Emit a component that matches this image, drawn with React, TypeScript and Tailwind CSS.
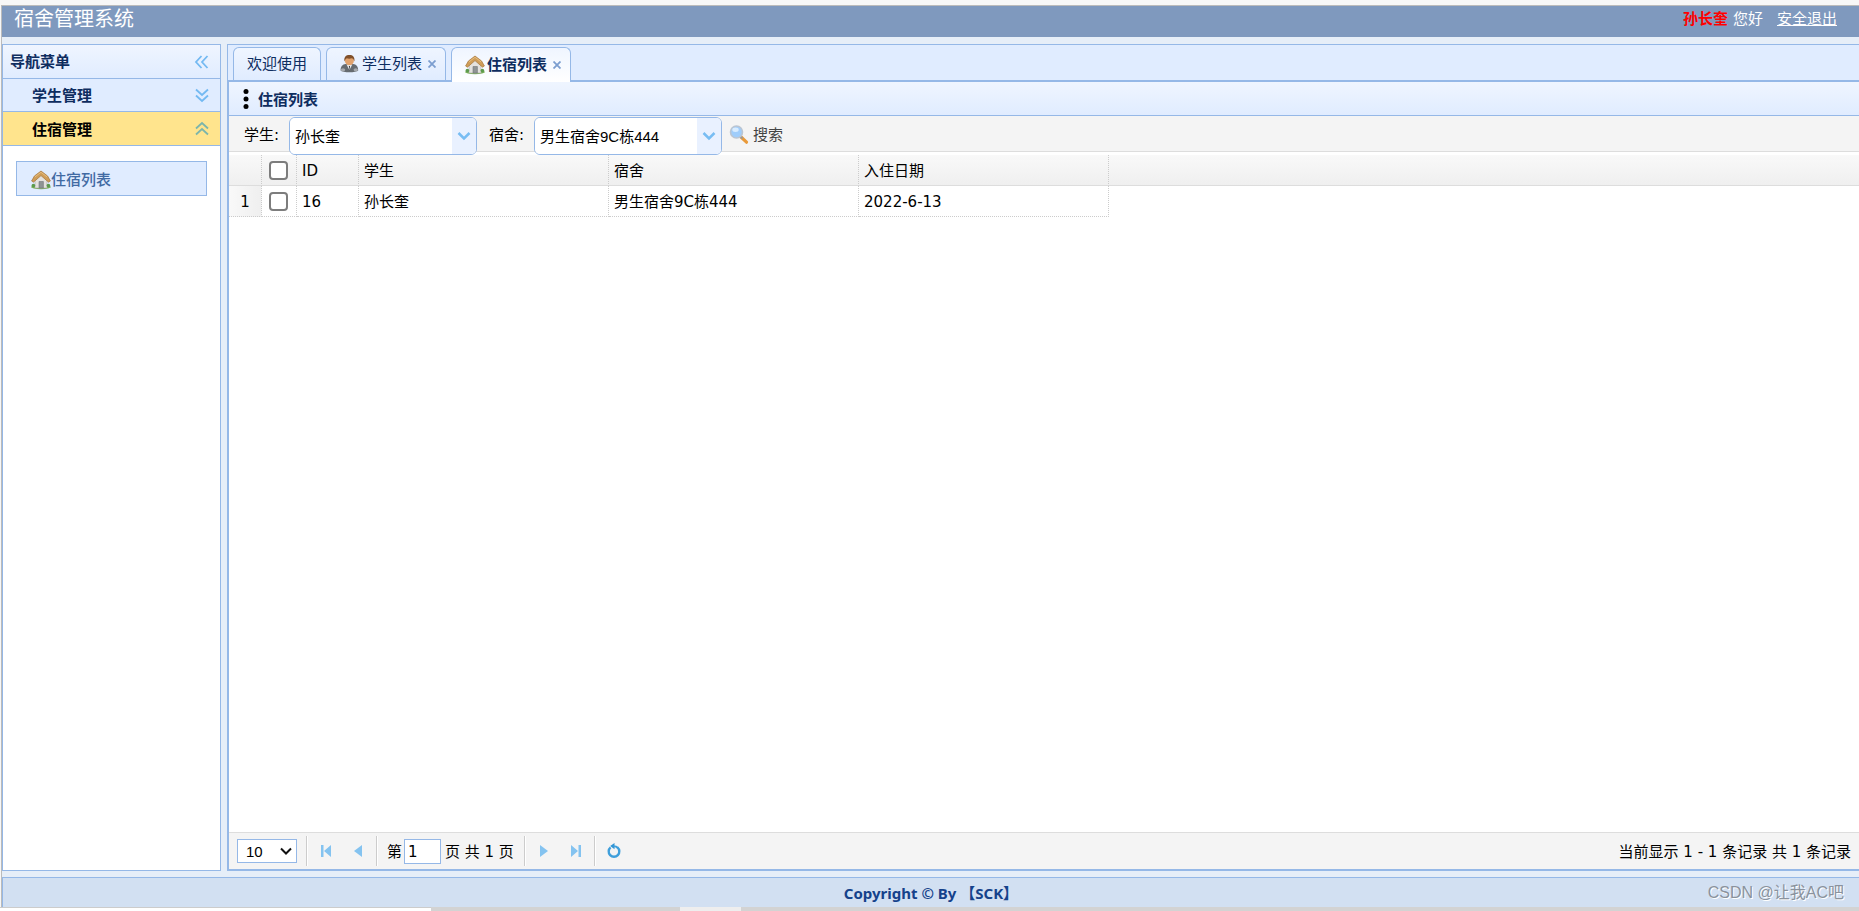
import type { ReactElement, ReactNode } from "react";
import { useState } from "react";

const outline = "border-[#95b8e7]";
const pagerButtonClass = "grid h-7 w-7 place-items-center";
const separatorClass = "h-[30px] w-0.5 border-l border-[#ccc] border-r border-r-white";
const dotted = "border-r border-dotted border-[#ccc]";
const cellClass = `px-[5px] pt-0.5 ${dotted}`;

interface Stay {
  readonly id: number;
  readonly student: string;
  readonly dorm: string;
  readonly date: string;
}

const stays: Stay[] = [{ id: 16, student: "孙长奎", dorm: "男生宿舍9C栋444", date: "2022-6-13" }];

function HouseIcon(): ReactElement {
  return (
    <svg className="h-5 w-5 shrink-0" viewBox="0 0 20 20" aria-hidden="true">
      <ellipse cx="10" cy="17" rx="10" ry="2.2" fill="#7cb05a" />
      <path d="M4 9 10 4l6 5v9H4z" fill="#e4e2de" stroke="#a9a7a2" strokeWidth="0.6" />
      <path d="M8 11.5h4.4V18H8z" fill="#8f9494" stroke="#73777a" strokeWidth="0.6" />
      <path d="M0.6 11 3.4 6 10 1l6.6 5 2.8 5-1.8 1.2L10 5.6 2.4 12.2z" fill="#cf9d58" stroke="#a57336" strokeWidth="0.7" />
      <path d="M3.8 7 10 2.3 16.2 7" fill="none" stroke="#e6bd7e" strokeWidth="1" />
      <circle cx="2.4" cy="15.6" r="1.8" fill="#5c9a4c" />
      <circle cx="17.4" cy="15.6" r="1.8" fill="#5c9a4c" />
    </svg>
  );
}

function StudentIcon(): ReactElement {
  return (
    <svg className="h-5 w-5 shrink-0" viewBox="0 0 20 20" aria-hidden="true">
      <path d="M0.600 16.500c0-4 2-6.200 5-6.500h7.600c3 .3 5 2.500 5 6.500-2 2.400-15.600 2.400-17.600 0z" fill="#666b70" />
      <path d="M6.500 10.500 9.400 16l2.900-5.500z" fill="#e8ebee" />
      <path d="m8.900 12 .5 5 .6-5z" fill="#33373b" />
      <ellipse cx="3" cy="15.800" rx="2.200" ry="1.500" fill="#a6a9ad" />
      <ellipse cx="15.800" cy="15.800" rx="2.200" ry="1.500" fill="#a6a9ad" />
      <circle cx="9.400" cy="6.800" r="4.500" fill="#e2a26c" />
      <path d="M4.400 7.500C3.800 2.800 6 1 9.400 1s5.600 1.800 5 6.500c-.8-2.200-1.600-3-2.600-3.200-2 .6-3.700.5-4.900 0-1.200.6-1.900 1.700-2.500 3.200z" fill="#80502a" />
    </svg>
  );
}

function SearchIcon(): ReactElement {
  return (
    <svg className="h-5 w-5 shrink-0" viewBox="0 0 20 20" aria-hidden="true">
      <path d="m12 12 5.500 5.200" stroke="#e99a3a" strokeWidth="3.200" strokeLinecap="round" />
      <path d="m11.500 11.500 2 2" stroke="#999" strokeWidth="2" />
      <circle cx="7.500" cy="7" r="6" fill="#9fcdfb" stroke="#bac5d2" strokeWidth="1.600" />
      <ellipse cx="6.500" cy="4.800" rx="3.200" ry="2.200" fill="#d8ecff" />
    </svg>
  );
}

function Chevrons({ d, color = "#73b9f2" }: { readonly d: string; readonly color?: string }): ReactElement {
  return (
    <svg className="h-4 w-4" viewBox="0 0 16 16" fill="none" stroke={color} strokeWidth="1.800" aria-hidden="true">
      <path d={d} />
    </svg>
  );
}

interface TabProps {
  readonly label: string;
  readonly icon?: ReactNode;
  readonly isActive?: boolean;
}

function Tab({ label, icon, isActive = false }: TabProps): ReactElement {
  const stateClass = isActive
    ? "h-[35px] border-b-0 bg-linear-to-b from-[#eff5ff] to-white font-bold"
    : "h-[33px] border-b-0 bg-linear-to-b from-[#eff5ff] to-[#e0ecff]";
  return (
    <div className={`flex items-center rounded-t-md border px-[11px] text-[#0e2d5f] ${outline} ${stateClass}`}>
      <button type="button" role="tab" aria-selected={isActive} className="flex items-center gap-0.5 whitespace-nowrap px-0.5">
        {icon}
        <span>{label}</span>
      </button>
      {icon ? (
        <button type="button" aria-label={`关闭${label}`} className="-mr-1 ml-0.5 grid h-4 w-3 place-items-center">
          <svg className="h-2 w-2" viewBox="0 0 8 8" stroke="#7c9ed0" strokeWidth="1.800" aria-hidden="true">
            <path d="m.5.5 7 7m0-7-7 7" />
          </svg>
        </button>
      ) : null}
    </div>
  );
}

function Combo({ id, value }: { readonly id: string; readonly value: string }): ReactElement {
  return (
    <div className={`relative z-10 flex h-[38px] w-[188px] overflow-hidden rounded-md border bg-white ${outline}`}>
      <select
        id={id}
        defaultValue={value}
        className="w-full appearance-none bg-white pl-[5px] pr-6 pt-0.5 font-['Liberation_Sans','Noto_Sans_CJK_SC',sans-serif]"
      >
        <option>{value}</option>
      </select>
      <span className="pointer-events-none absolute inset-y-0 right-0 grid w-6 place-items-center bg-[#e9f1ff]">
        <svg className="h-4 w-4" viewBox="0 0 16 16" fill="none" stroke="#78bdf3" strokeWidth="2.500" aria-hidden="true">
          <path d="m2.500 5 5.500 5.500L13.500 5" />
        </svg>
      </span>
    </div>
  );
}

function Checkbox({ label }: { readonly label: string }): ReactElement {
  return (
    <input
      type="checkbox"
      aria-label={label}
      className="ml-[7px] block h-[19px] w-[19px] appearance-none rounded-[4px] border-2 border-[#7d7d7d] bg-white checked:bg-[#0075ff]"
    />
  );
}

function Sidebar(): ReactElement {
  return (
    <nav className={`flex w-[219px] shrink-0 flex-col border bg-white ${outline}`}>
      <div className={`flex h-[34px] items-center justify-between border-b bg-linear-to-b from-[#eff5ff] to-[#e0ecff] pl-[7px] pr-2.5 font-bold text-[#0e2d5f] ${outline}`}>
        <h2>导航菜单</h2>
        <button type="button" aria-label="收起">
          <Chevrons d="M7.500 2 2 8l5.500 6M13.500 2 8 8l5.500 6" />
        </button>
      </div>
      <button type="button" className={`flex h-[33px] items-center justify-between border-b bg-[#e0ecff] pl-[29px] pr-2.5 font-bold text-[#0e2d5f] ${outline}`}>
        <span className="pt-0.5">学生管理</span>
        <Chevrons d="m2 2.500 6 5.500 6-5.500M2 8.500 8 14l6-5.500" />
      </button>
      <button type="button" className={`flex h-[34px] items-center justify-between border-b bg-[#ffe48d] pl-[29px] pr-2.5 font-bold ${outline}`}>
        <span className="pt-0.5">住宿管理</span>
        <Chevrons d="m2 7.500 6-5.500 6 5.500M2 13.500 8 8l6 5.500" color="#7cb5ab" />
      </button>
      <div className="px-[13px] py-[15px]">
        <a href="#stays" className={`flex h-[35px] items-center border bg-[#e0ecff] px-3.5 pt-[3px] font-medium text-[#416aa3] ${outline}`}>
          <HouseIcon />
          住宿列表
        </a>
      </div>
    </nav>
  );
}

function StayTable(): ReactElement {
  return (
    <table className="mt-[3px] w-full table-fixed border-separate border-spacing-0 text-left">
      <colgroup>
        <col className="w-[33px]" />
        <col className="w-[35px]" />
        <col className="w-[62px]" />
        <col className="w-[250px]" />
        <col className="w-[250px]" />
        <col className="w-[250px]" />
        <col />
      </colgroup>
      <thead className="bg-linear-to-b from-[#f9f9f9] to-[#efefef]">
        <tr className="h-[31px] *:border-b *:border-b-[#ddd] *:[border-bottom-style:solid] *:font-normal">
          <th className={dotted} />
          <th className={dotted}><Checkbox label="全选" /></th>
          <th className={cellClass}>ID</th>
          <th className={cellClass}>学生</th>
          <th className={cellClass}>宿舍</th>
          <th className={cellClass}>入住日期</th>
          <th />
        </tr>
      </thead>
      <tbody>
        {stays.map((stay, i) => (
          <tr key={stay.id} className="h-[31px]">
            <td className={`border-b bg-linear-to-r from-[#f9f9f9] to-[#efefef] text-center ${cellClass}`}>{i + 1}</td>
            <td className={`border-b ${dotted}`}><Checkbox label={stay.student} /></td>
            <td className={`border-b ${cellClass}`}>{stay.id}</td>
            <td className={`border-b ${cellClass}`}>{stay.student}</td>
            <td className={`border-b ${cellClass}`}>{stay.dorm}</td>
            <td className={`border-b ${cellClass}`}>{stay.date}</td>
            <td />
          </tr>
        ))}
      </tbody>
    </table>
  );
}

function Pager(): ReactElement {
  const [page, setPage] = useState("1");
  return (
    <div className="flex h-[37px] items-center border-t border-[#ddd] bg-[#f4f4f4] px-2">
      <div className="relative mr-[9px]">
        <select
          aria-label="每页条数"
          className={`block h-6 w-[60px] appearance-none border bg-white pl-2 pt-px font-['Liberation_Sans',sans-serif] ${outline}`}
        >
          <option>10</option>
          <option>20</option>
        </select>
        <svg className="pointer-events-none absolute right-[5px] top-1.5 h-3 w-3" viewBox="0 0 12 12" fill="none" stroke="#111" strokeWidth="2" aria-hidden="true">
          <path d="m1 3.500 5 5 5-5" />
        </svg>
      </div>
      <span className={separatorClass} />
      <div className="flex gap-1 px-1">
        <button type="button" aria-label="首页" className={pagerButtonClass}>
          <svg className="h-3.5 w-3" viewBox="0 0 12 14" fill="#84c3f0" aria-hidden="true"><path d="M1 1h2.500v12H1zM11 1v12L4 7z" /></svg>
        </button>
        <button type="button" aria-label="上一页" className={pagerButtonClass}>
          <svg className="h-3.5 w-3" viewBox="0 0 12 14" fill="#84c3f0" aria-hidden="true"><path d="M10 1v12L2 7z" /></svg>
        </button>
      </div>
      <span className={separatorClass} />
      <label className="flex items-center px-[9px]">
        <span className="pt-0.5">第</span>
        <input
          value={page}
          onChange={(event) => { setPage(event.target.value); }}
          className={`ml-0.5 mr-1 h-[25px] w-[37px] border bg-white px-[3px] pt-px ${outline}`}
        />
        <span className="whitespace-nowrap pr-px pt-0.5">页 共 1 页</span>
      </label>
      <span className={separatorClass} />
      <div className="flex gap-1 px-1">
        <button type="button" aria-label="下一页" className={pagerButtonClass}>
          <svg className="h-3.5 w-3" viewBox="0 0 12 14" fill="#84c3f0" aria-hidden="true"><path d="M2 1v12l8-6z" /></svg>
        </button>
        <button type="button" aria-label="末页" className={pagerButtonClass}>
          <svg className="h-3.5 w-3" viewBox="0 0 12 14" fill="#84c3f0" aria-hidden="true"><path d="M8.500 1H11v12H8.500zM1 1v12l7-6z" /></svg>
        </button>
      </div>
      <span className={separatorClass} />
      <button type="button" aria-label="刷新" className={`ml-1 ${pagerButtonClass}`}>
        <svg className="h-4 w-4" viewBox="0 0 16 16" fill="none" aria-hidden="true">
          <path d="M4.600 4.400A5.300 5.300 0 1 0 11.400 4.400" stroke="#3f9fdb" strokeWidth="2.400" />
          <path d="M8.500 0v6.200L4.200 3z" fill="#2f93d4" />
          <path d="M7.500 3.200c2 0 3.200.3 4.500 1.800" stroke="#3f9fdb" strokeWidth="2" />
        </svg>
      </button>
      <p className="ml-auto whitespace-nowrap pt-0.5">当前显示 1 - 1 条记录 共 1 条记录</p>
    </div>
  );
}

export default function App(): ReactElement {
  return (
    <div className="flex h-screen flex-col overflow-hidden bg-[#f7f7f7] pt-[5px] font-['DejaVu_Sans','Noto_Sans_CJK_SC',sans-serif] text-[15px] leading-5 text-black">
      <div className="ml-px flex min-h-0 flex-1 flex-col border-l border-[#bbb] bg-[#e6eef8]">
        <header className="flex h-8 items-start justify-between border-t border-[#bbb] bg-[#7f99be] pl-3 pr-[22px] text-white">
          <h1 className="text-xl leading-[26px]">宿舍管理系统</h1>
          <p className="flex pt-[3px]">
            <strong className="mr-[5px] text-[#f00]">孙长奎</strong>
            您好
            <a href="#logout" className="ml-3.5 underline">安全退出</a>
          </p>
        </header>

        <div className="flex min-h-0 flex-1 gap-1.5 py-[7px] pb-1.5">
          <Sidebar />
          <main className={`flex min-w-0 flex-1 flex-col border-t bg-white ${outline}`}>
            <div className={`flex h-[37px] shrink-0 items-start gap-[5px] border-b-2 border-l bg-[#e0ecff] pl-[5px] pt-0.5 ${outline}`} role="tablist">
              <Tab label="欢迎使用" />
              <Tab label="学生列表" icon={<StudentIcon />} />
              <Tab label="住宿列表" icon={<HouseIcon />} isActive />
            </div>
            <section className={`flex min-h-0 flex-1 flex-col border-b-2 border-l-2 ${outline}`}>
              <div className={`flex h-[34px] shrink-0 items-center gap-[9px] border-b bg-linear-to-b from-[#eff5ff] to-[#e0ecff] pl-3.5 font-bold text-[#0e2d5f] ${outline}`}>
                <svg className="h-5 w-[6px]" viewBox="0 0 6 20" aria-hidden="true">
                  <circle cx="3" cy="2.500" r="2.500" />
                  <circle cx="3" cy="10" r="2.500" />
                  <circle cx="3" cy="17.500" r="2.500" />
                </svg>
                <h2 className="pt-0.5">住宿列表</h2>
              </div>
              <div className="flex h-9 shrink-0 items-start border-b border-[#ddd] bg-[#f4f4f4] pl-[15px] pt-px">
                <label htmlFor="student" className="w-[45px] pt-2">学生:</label>
                <Combo id="student" value="孙长奎" />
                <label htmlFor="dorm" className="ml-3 w-[45px] pt-2">宿舍:</label>
                <Combo id="dorm" value="男生宿舍9C栋444" />
                <button type="button" className="ml-[7px] flex items-center gap-1 pt-2 text-[#444]">
                  <SearchIcon />
                  搜索
                </button>
              </div>
              <div id="stays" className="min-h-0 flex-1">
                <StayTable />
              </div>
              <Pager />
            </section>
          </main>
        </div>

        <footer className={`relative h-[30px] shrink-0 border-l border-t bg-[#d2e0f2] text-center font-['Noto_Sans','Noto_Sans_CJK_SC',sans-serif] font-bold leading-[30px] text-[#15428b] ${outline}`}>
          Copyright © By 【SCK】
          <span className="absolute right-[15px] top-0 font-['Liberation_Sans','Noto_Sans_CJK_SC',sans-serif] text-base font-normal leading-[30px] text-[#8a929d] [text-shadow:1px_1px_0_#fff]">
            CSDN @让我AC吧
          </span>
        </footer>
      </div>
      <div className="flex h-1 shrink-0 bg-[#d3d3d3]">
        <div className="w-[431px] border-t border-[#ccc] bg-white" />
        <div className="ml-[249px] w-[61px] bg-[#eee]" />
      </div>
    </div>
  );
}
